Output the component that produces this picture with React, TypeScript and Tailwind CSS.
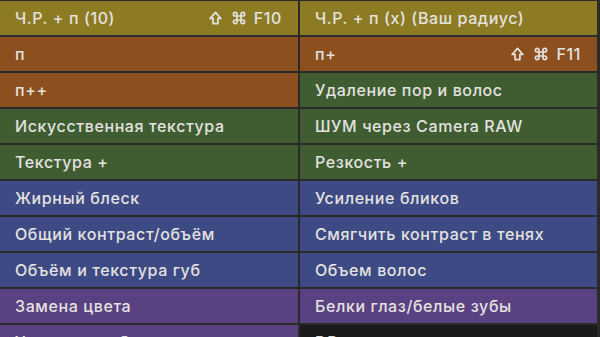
import React from 'react';

type Cell = { label: string; bg: string; keys?: string };

const rows: [Cell, Cell][] = [
  [
    { label: 'Ч.Р. + п (10)', bg: 'bg-[#8d7b23]', keys: 'F10' },
    { label: 'Ч.Р. + п (x) (Ваш радиус)', bg: 'bg-[#8d7b23]' },
  ],
  [
    { label: 'п', bg: 'bg-[#8b501e]' },
    { label: 'п+', bg: 'bg-[#8b501e]', keys: 'F11' },
  ],
  [
    { label: 'п++', bg: 'bg-[#8b501e]' },
    { label: 'Удаление пор и волос', bg: 'bg-[#3f5d31]' },
  ],
  [
    { label: 'Искусственная текстура', bg: 'bg-[#3f5d31]' },
    { label: 'ШУМ через Camera RAW', bg: 'bg-[#3f5d31]' },
  ],
  [
    { label: 'Текстура +', bg: 'bg-[#3f5d31]' },
    { label: 'Резкость +', bg: 'bg-[#3f5d31]' },
  ],
  [
    { label: 'Жирный блеск', bg: 'bg-[#3d4a83]' },
    { label: 'Усиление бликов', bg: 'bg-[#3d4a83]' },
  ],
  [
    { label: 'Общий контраст/объём', bg: 'bg-[#3d4a83]' },
    { label: 'Смягчить контраст в тенях', bg: 'bg-[#3d4a83]' },
  ],
  [
    { label: 'Объём и текстура губ', bg: 'bg-[#3d4a83]' },
    { label: 'Объем волос', bg: 'bg-[#3d4a83]' },
  ],
  [
    { label: 'Замена цвета', bg: 'bg-[#5a4181]' },
    { label: 'Белки глаз/белые зубы', bg: 'bg-[#5a4181]' },
  ],
  [
    { label: 'Устранение бликов', bg: 'bg-[#5a4181]' },
    { label: 'DD', bg: 'bg-[#1b1b1b]' },
  ],
];

const ShiftIcon = () => (
  <svg width="13" height="14" viewBox="0 0 14 15" fill="none" stroke="currentColor" strokeWidth="1.9" strokeLinejoin="round">
    <path d="M7 1.5 L12.8 8 H9.6 V13.5 H4.4 V8 H1.2 Z" />
  </svg>
);

const CmdIcon = () => (
  <svg width="14" height="14" viewBox="0 0 14 14" fill="none" stroke="currentColor" strokeWidth="1.7">
    <path d="M5 5 H9 V9 H5 Z M5 5 V3.2 A1.8 1.8 0 1 0 3.2 5 H5 M9 5 V3.2 A1.8 1.8 0 1 1 10.8 5 H9 M5 9 V10.8 A1.8 1.8 0 1 1 3.2 9 H5 M9 9 V10.8 A1.8 1.8 0 1 0 10.8 9 H9" />
  </svg>
);

const Row = ({ cell }: { cell: Cell }) => (
  <div className={`h-[34px] flex items-center justify-between pl-[15px] pr-[16px] ${cell.bg}`}>
    <span className="truncate">{cell.label}</span>
    {cell.keys && (
      <span className="flex items-center">
        <ShiftIcon />
        <span className="ml-[10px]"><CmdIcon /></span>
        <span className="ml-[8px]">{cell.keys}</span>
      </span>
    )}
  </div>
);

export default function App() {
  return (
    <div
      className="w-[600px] h-[337px] overflow-hidden bg-[#2a2a29] pt-[1px] pr-[3px] text-[16px] tracking-[0.6px] font-medium text-[#e4e2e0]"
      style={{ fontFamily: 'Inter, "Noto Sans", sans-serif' }}
    >
      <div className="grid grid-cols-[298px_297px] gap-x-[2px] gap-y-[2px]">
        {rows.map(([l, r], i) => (
          <React.Fragment key={i}>
            <Row cell={l} />
            <Row cell={r} />
          </React.Fragment>
        ))}
      </div>
    </div>
  );
}
